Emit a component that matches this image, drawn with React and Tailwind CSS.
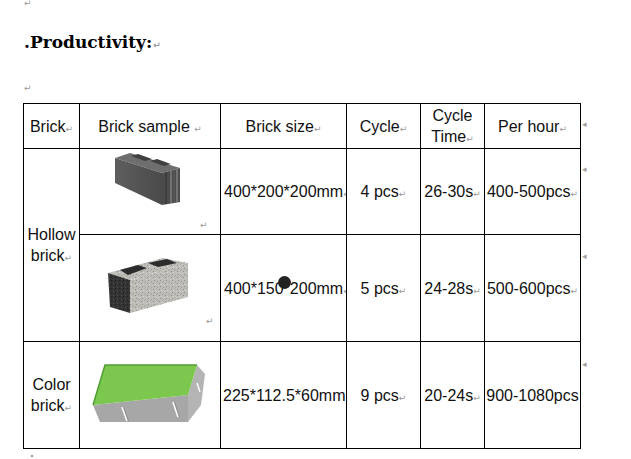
import React from "react";

const Mark = ({ className = "" }) => (
  <span className={"font-['DejaVu_Sans'] text-[9px] leading-none text-[#9a9a9a] " + className}>↵</span>
);

const RowMark = () => (
  <span className="font-['DejaVu_Sans'] text-[9px] leading-none text-[#a0a0a0]">◂</span>
);

function Brick1() {
  return (
    <svg width="110" height="70" viewBox="0 0 110 70">
      <defs>
        <linearGradient id="b1f" x1="0" y1="0" x2="1" y2="0">
          <stop offset="0" stopColor="#5e5e5e" />
          <stop offset="1" stopColor="#4a4a4a" />
        </linearGradient>
      </defs>
      <polygon points="15,8 30,3 80,18 62,23" fill="#6e6e6e" />
      <polygon points="31,6 38,4 52,9 45,11" fill="#404040" />
      <polygon points="50,11 57,9 71,14 64,16" fill="#404040" />
      <polygon points="15,8 62,23 62,55 15,33" fill="url(#b1f)" />
      <polygon points="62,23 80,18 80,52 62,55" fill="#4c4c4c" />
      <line x1="66" y1="22" x2="66" y2="54" stroke="#3a3a3a" strokeWidth="1.5" />
      <line x1="71" y1="21" x2="71" y2="53" stroke="#8c8c8c" strokeWidth="1.2" />
      <line x1="74" y1="20" x2="74" y2="53" stroke="#5e5e5e" strokeWidth="1" />
      <line x1="77" y1="19" x2="77" y2="52" stroke="#999" strokeWidth="1" />
    </svg>
  );
}

function Brick2() {
  return (
    <svg width="110" height="66" viewBox="0 0 110 66">
      <defs>
        <pattern id="spk" width="6" height="6" patternUnits="userSpaceOnUse">
          <rect width="6" height="6" fill="#bdbcb6" />
          <rect x="0" y="0" width="1" height="1" fill="#8f8e88" />
          <rect x="3" y="1" width="1" height="1" fill="#a19f99" />
          <rect x="1" y="4" width="1" height="1" fill="#d8d7d1" />
          <rect x="5" y="3" width="1" height="1" fill="#8a8983" />
          <rect x="4" y="5" width="1" height="1" fill="#cfcec8" />
          <rect x="2" y="2" width="1" height="1" fill="#aaa9a3" />
        </pattern>
        <pattern id="spk2" width="4" height="4" patternUnits="userSpaceOnUse">
          <rect width="4" height="4" fill="#333" />
          <rect x="1" y="1" width="1" height="1" fill="#4e4e4e" />
          <rect x="3" y="2" width="1" height="1" fill="#202020" />
        </pattern>
      </defs>
      <polygon points="8,23 63,8 88,13 30,30" fill="url(#spk)" />
      <polygon points="20,20 38,15 47,18 28,25" fill="#2c2c2c" />
      <polygon points="48,13 67,9 77,13 58,17" fill="#2c2c2c" />
      <polygon points="8,23 30,30 30,63 10,57" fill="url(#spk2)" />
      <polygon points="30,30 88,13 88,47 30,63" fill="url(#spk)" />
    </svg>
  );
}

function Brick3() {
  return (
    <svg width="120" height="75" viewBox="0 0 120 75">
      <polygon points="98,40 107,10 115,19 111,50 98,67" fill="#b4b4b4" />
      <polygon points="3,50 98,40 98,67 10,67" fill="#a7a7a7" />
      <polygon points="15,10 107,10 98,40 3,50" fill="#7cc84e" />
      <polyline points="3,50 15,10 107,10" fill="none" stroke="#4f9e33" strokeWidth="1.5" />
      <line x1="32" y1="52" x2="37" y2="66" stroke="#ffffff" strokeWidth="1.6" />
      <line x1="33.5" y1="52" x2="38.5" y2="66" stroke="#777" strokeWidth="0.6" />
      <line x1="83" y1="47" x2="88" y2="62" stroke="#ffffff" strokeWidth="1.6" />
      <line x1="84.5" y1="47" x2="89.5" y2="62" stroke="#777" strokeWidth="0.6" />
      <line x1="107" y1="28" x2="110" y2="37" stroke="#ffffff" strokeWidth="1.4" />
    </svg>
  );
}

const td = "border border-black p-0 text-center align-middle overflow-hidden whitespace-nowrap";

export default function App() {
  return (
    <div className="w-[631px] h-[459px] bg-white overflow-hidden relative font-['Liberation_Sans',Arial,sans-serif] text-[#111]">
      <div className="pl-[24px] h-[10px] flex items-start">
        <Mark className="mt-[-1px]" />
      </div>
      <div className="pl-[24px] mt-[21px] h-[22px] font-['DejaVu_Serif',serif] font-bold text-[17px] leading-[22px] text-black">
        .Productivity:<Mark className="ml-[1px]" />
      </div>
      <div className="pl-[24px] mt-[30px] h-[10px] flex items-center">
        <Mark />
      </div>
      <div className="mt-[10px] pl-[23px] flex">
        <table className="border-collapse table-fixed w-[557px] text-[16px] leading-[21px]">
          <colgroup>
            <col className="w-[56px]" />
            <col className="w-[141px]" />
            <col className="w-[126px]" />
            <col className="w-[74px]" />
            <col className="w-[64px]" />
            <col className="w-[96px]" />
          </colgroup>
          <tbody>
            <tr className="h-[45px]">
              <td className={td}>Brick<Mark /></td>
              <td className={td}>Brick sample <Mark /></td>
              <td className={td}>Brick size<Mark /></td>
              <td className={td}>Cycle<Mark /></td>
              <td className={td}>Cycle<br />Time<Mark /></td>
              <td className={td}>Per hour<Mark /></td>
            </tr>
            <tr className="h-[86px]">
              <td className={td} rowSpan={2}>Hollow<br />brick<Mark /></td>
              <td className="border border-black p-0 align-top">
                <div className="flex flex-col">
                  <div className="pl-[20px] pt-[1px] h-[71px]"><Brick1 /></div>
                  <div className="pl-[120px] h-[10px] leading-[10px] flex items-center"><Mark /></div>
                </div>
              </td>
              <td className={td + " text-left pl-[3px]"}>400*200*200mm<Mark /></td>
              <td className={td}>4 pcs<Mark /></td>
              <td className={td}>26-30s<Mark /></td>
              <td className={td}>400-500pcs<Mark /></td>
            </tr>
            <tr className="h-[107px]">
              <td className="border border-black p-0 align-top">
                <div className="flex flex-col">
                  <div className="pl-[20px] pt-[15px] h-[81px]"><Brick2 /></div>
                  <div className="pl-[126px] h-[10px] flex items-center"><Mark /></div>
                </div>
              </td>
              <td className={td + " text-left pl-[3px]"}>400*150*200mm<Mark /></td>
              <td className={td}>5 pcs<Mark /></td>
              <td className={td}>24-28s<Mark /></td>
              <td className={td}>500-600pcs<Mark /></td>
            </tr>
            <tr className="h-[107px]">
              <td className={td}>Color<br />brick<Mark /></td>
              <td className="border border-black p-0 align-top">
                <div className="pl-[10px] pt-[13px]"><Brick3 /></div>
              </td>
              <td className={td + " text-left pl-[2px]"}>225*112.5*60mm<Mark /></td>
              <td className={td}>9 pcs<Mark /></td>
              <td className={td}>20-24s<Mark /></td>
              <td className={td}>900-1080pcs</td>
            </tr>
          </tbody>
        </table>
        <div className="flex flex-col pl-[1px]">
          <div className="h-[45px] pt-[7px]"><RowMark /></div>
          <div className="h-[86px] pt-[7px]"><RowMark /></div>
          <div className="h-[107px] pt-[8px]"><RowMark /></div>
          <div className="h-[107px] pt-[9px]"><RowMark /></div>
        </div>
      </div>
      <div className="pl-[31px] mt-[2px] h-[10px] flex items-center">
        <span className="w-[2px] h-[2px] bg-[#999]" />
      </div>
      <div className="absolute left-[278px] top-[276px] w-[13px] h-[13px] rounded-full bg-[#222]" />
    </div>
  );
}
